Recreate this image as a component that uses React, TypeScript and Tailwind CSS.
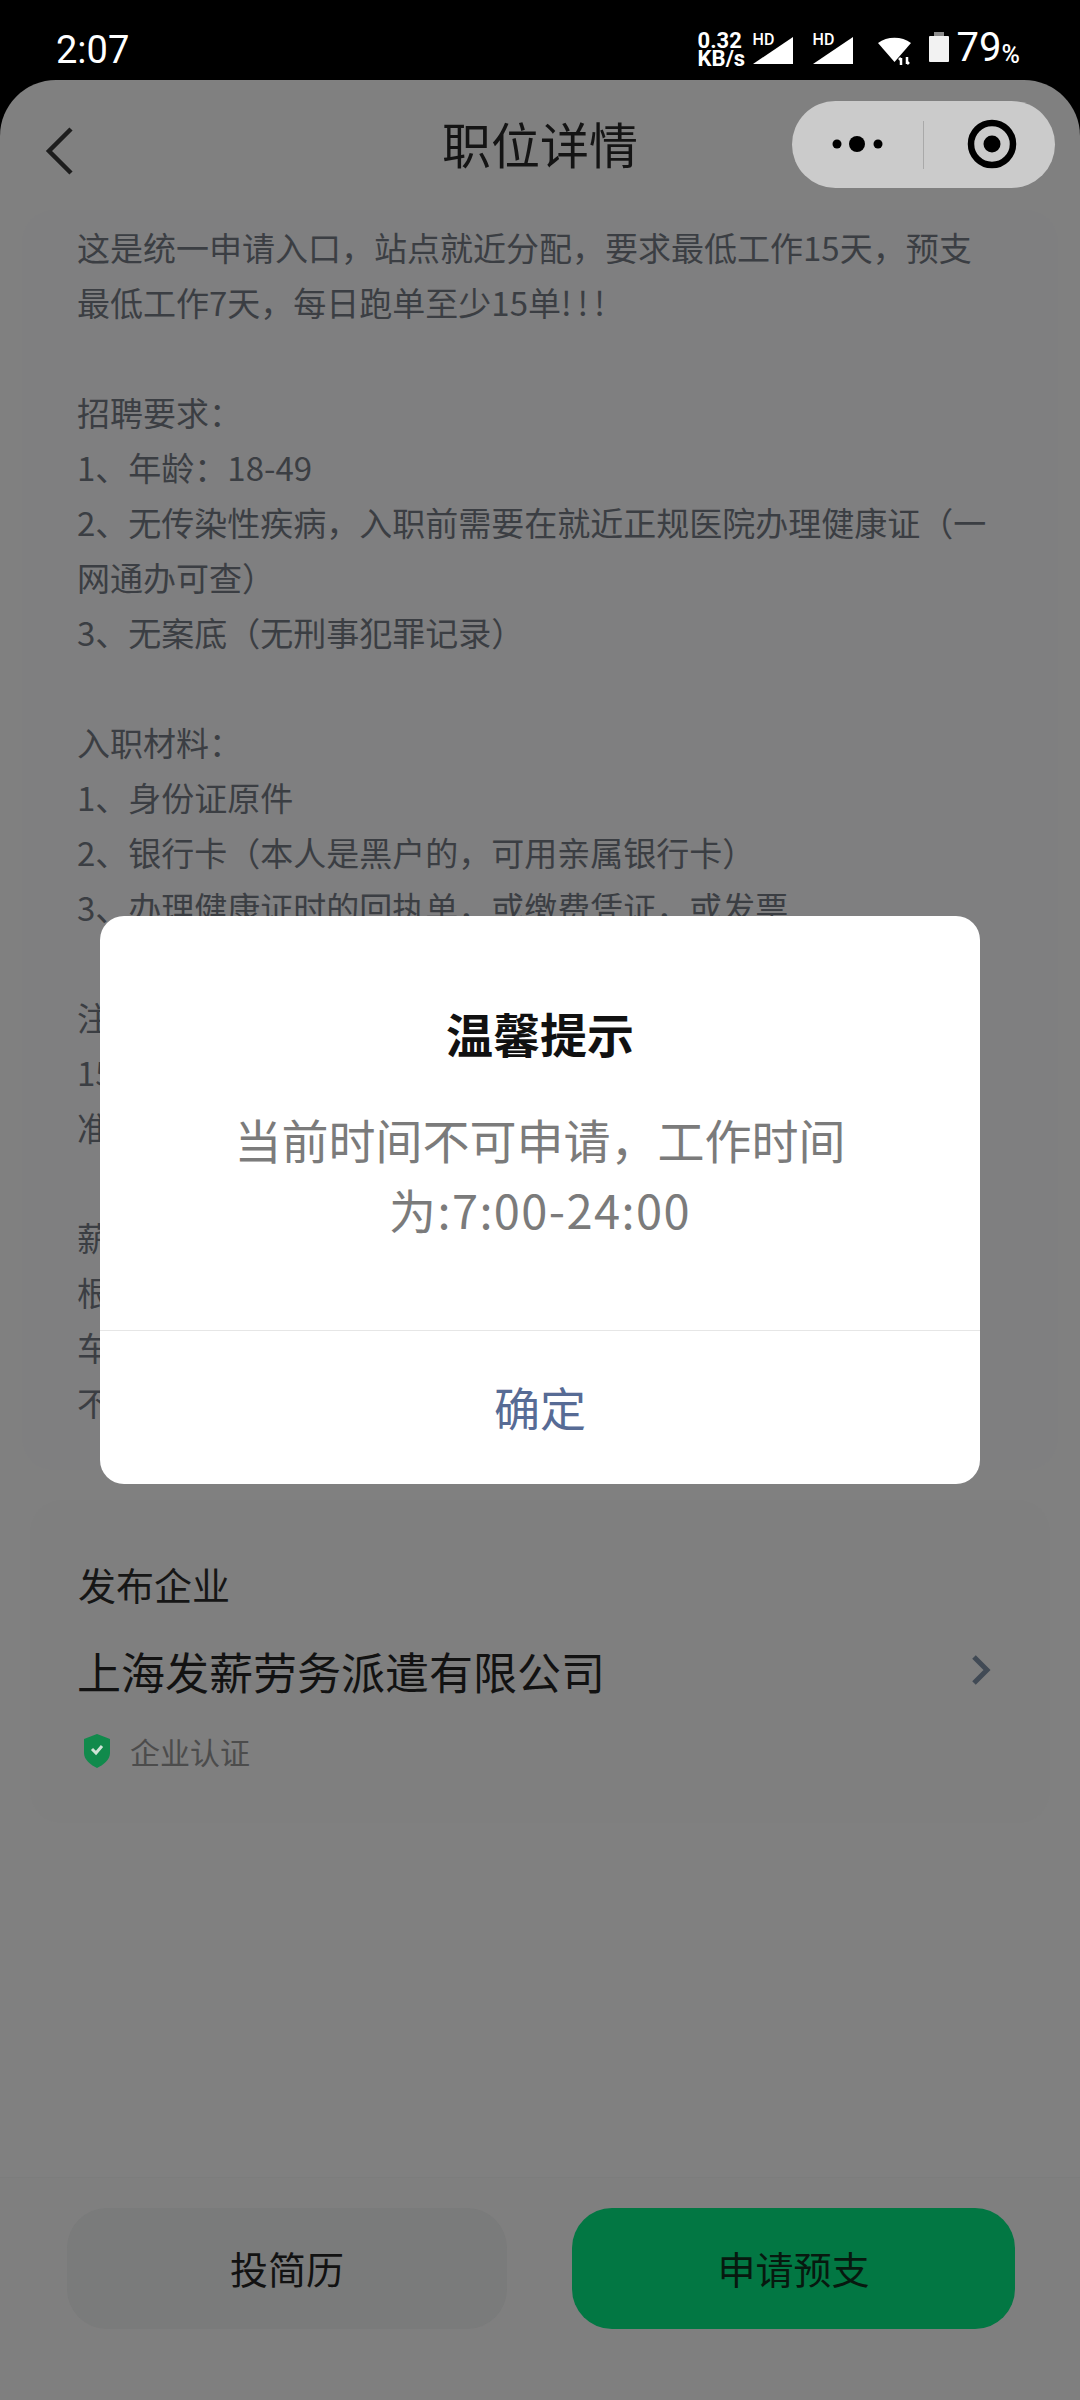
const lines = [
  "这是统一申请入口，站点就近分配，要求最低工作15天，预支",
  "最低工作7天，每日跑单至少15单",
  "",
  "招聘要求：",
  "1、年龄：18-49",
  "2、无传染性疾病，入职前需要在就近正规医院办理健康证（一",
  "网通办可查）",
  "3、无案底（无刑事犯罪记录）",
  "",
  "入职材料：",
  "1、身份证原件",
  "2、银行卡（本人是黑户的，可用亲属银行卡）",
  "3、办理健康证时的回执单，或缴费凭证，或发票",
  "",
  "注意事项：",
  "15天内离职无工资",
  "准时到岗",
  "",
  "薪资待遇：",
  "根据单量结算",
  "车辆自备",
  "不收取任何费用",
];

function Signal() {
  return (
    <div className="relative h-[30px] w-[41px]">
      <svg width="41" height="30" viewBox="0 0 41 30" className="absolute left-0 top-0">
        <path d="M40 2V29H0Z" fill="#fff" />
      </svg>
      <span className="absolute left-0 top-[-4px] text-[16px] leading-[18px] font-medium text-white [font-family:Roboto,sans-serif]">HD</span>
    </div>
  );
}

export default function App() {
  return (
    <div className="relative flex h-[2400px] w-[1080px] flex-col overflow-hidden bg-black [font-family:'Noto_Sans_CJK_SC',sans-serif]">
      <div className="flex h-[80px] shrink-0 items-start justify-between pl-[56px] pr-[60px] text-white">
        <span className="mt-[27px] text-[38px] leading-[46px] [font-family:Roboto,sans-serif]">2:07</span>
        <div className="mt-[32px] flex items-start [font-family:Roboto,sans-serif]">
          <div className="flex w-[55px] flex-col text-[22px] font-bold leading-[18px]">
            <span>0.32</span>
            <span>KB/s</span>
          </div>
          <div className="mt-[3px]"><Signal /></div>
          <div className="ml-[19px] mt-[3px]"><Signal /></div>
          <svg width="36" height="30" viewBox="0 0 36 30" className="ml-[23px] mt-[4px]">
            <path d="M1 7C10 0 25 0 34 7L17.5 26Z" fill="#fff" />
            <path d="M24 22v7M22 24l2-2M30 21v7M32 26l-2 2" stroke="#fff" strokeWidth="2.5" fill="none" />
          </svg>
          <div className="ml-[16px] flex flex-col items-center">
            <div className="h-[4px] w-[10px] bg-[#8c8c8c]" />
            <div className="h-[26px] w-[20px] rounded-[1px] bg-[#f2f2f2]" />
          </div>
          <span className="ml-[8px] mt-[-7px] text-[40px] leading-[46px]">79</span>
          <span className="mt-[9px] text-[25px] font-medium leading-[28px]">%</span>
        </div>
      </div>

      <div className="flex min-h-0 flex-1 flex-col rounded-t-[56px] bg-[#808080]">
        <div className="relative flex h-[130px] shrink-0 items-center justify-center">
          <svg width="30" height="50" viewBox="0 0 30 50" className="absolute left-[44px] top-[46px]">
            <path d="M27 3L5 25L27 47" stroke="#1d1d1d" strokeWidth="4.5" fill="none" />
          </svg>
          <span className="mt-[-4px] text-[49px] leading-[60px] text-[#141414]">职位详情</span>
          <div className="absolute left-[792px] top-[21px] flex h-[87px] w-[263px] items-center rounded-full bg-[#cbcbcb]">
            <svg width="131" height="87" viewBox="0 0 131 87">
              <circle cx="45" cy="43" r="4.5" fill="#000" />
              <circle cx="65" cy="43" r="8" fill="#000" />
              <circle cx="86" cy="43" r="4.5" fill="#000" />
            </svg>
            <div className="h-[48px] w-px bg-[#a9a9a9]" />
            <svg width="131" height="87" viewBox="0 0 131 87">
              <circle cx="68" cy="43" r="21" stroke="#000" strokeWidth="6.5" fill="none" />
              <circle cx="68" cy="43" r="8.5" fill="#000" />
            </svg>
          </div>
        </div>

        <div className="mx-[22px] rounded-[32px] bg-[#7f7f80] pb-[40px] pl-[55px] pr-[56px] pt-[10px] text-[33px] leading-[55px] text-[#3b3e43]">
          {lines.map((line, i) => (
            <div key={i} className="h-[55px] whitespace-nowrap">
              {line}
              {i === 1 && <span className="tracking-[6px]">!!!</span>}
            </div>
          ))}
        </div>

        <div className="mx-[30px] mt-[30px] rounded-[32px] bg-[#7f7f7f] pb-[52px] pl-[48px] pr-[58px] pt-[56px]">
          <div className="text-[38px] leading-[55px] text-[#161616]">发布企业</div>
          <div className="mt-[30px] flex items-center justify-between">
            <span className="ml-[-1px] text-[44px] leading-[60px] text-[#121212]">上海发薪劳务派遣有限公司</span>
            <svg width="22" height="32" viewBox="0 0 22 32" className="mt-[-2px]">
              <path d="M4 3L17 16L4 29" stroke="#414a55" strokeWidth="5" fill="none" />
            </svg>
          </div>
          <div className="mt-[30px] flex h-[40px] items-center">
            <svg width="28" height="34" viewBox="0 0 28 34" className="ml-[5px]">
              <path d="M14 0L27 5V19C27 26 20 31 14 34C8 31 1 26 1 19V5Z" fill="#118a4c" />
              <path d="M9 15L13 19L19 12" stroke="#cfe3d7" strokeWidth="3" fill="none" />
            </svg>
            <span className="ml-[19px] text-[30px] leading-[40px] text-[#4c4c4c]">企业认证</span>
          </div>
        </div>

        <div className="mt-auto flex h-[223px] shrink-0 gap-[65px] border-t border-[#7c7d7d] bg-[#7f7f7f] pl-[67px] pr-[65px] pt-[30px]">
          <div className="flex h-[121px] w-[440px] items-center justify-center rounded-[40px] bg-[#7a7b7b] pb-[3px] text-[38px] text-[#121212]">投简历</div>
          <div className="flex h-[121px] w-[443px] items-center justify-center rounded-[40px] bg-[#027743] pb-[3px] text-[38px] text-[#07190f]">申请预支</div>
        </div>
      </div>

      <div className="absolute left-[100px] top-[916px] flex h-[568px] w-[880px] flex-col rounded-[24px] bg-white">
        <div className="flex flex-1 flex-col items-center pt-[87px]">
          <div className="text-[47px] font-bold leading-[60px] text-[#111111]">温馨提示</div>
          <div className="mt-[41px] text-center text-[47px] leading-[70px] text-[#7b7b7b]">
            <div>当前时间不可申请，工作时间</div>
            <div className="tracking-[1.4px]">为:7:00-24:00</div>
          </div>
        </div>
        <div className="flex h-[154px] shrink-0 items-center justify-center border-t border-[#e6e6e6] pb-[3px] text-[46px] text-[#576b95]">确定</div>
      </div>
    </div>
  );
}
